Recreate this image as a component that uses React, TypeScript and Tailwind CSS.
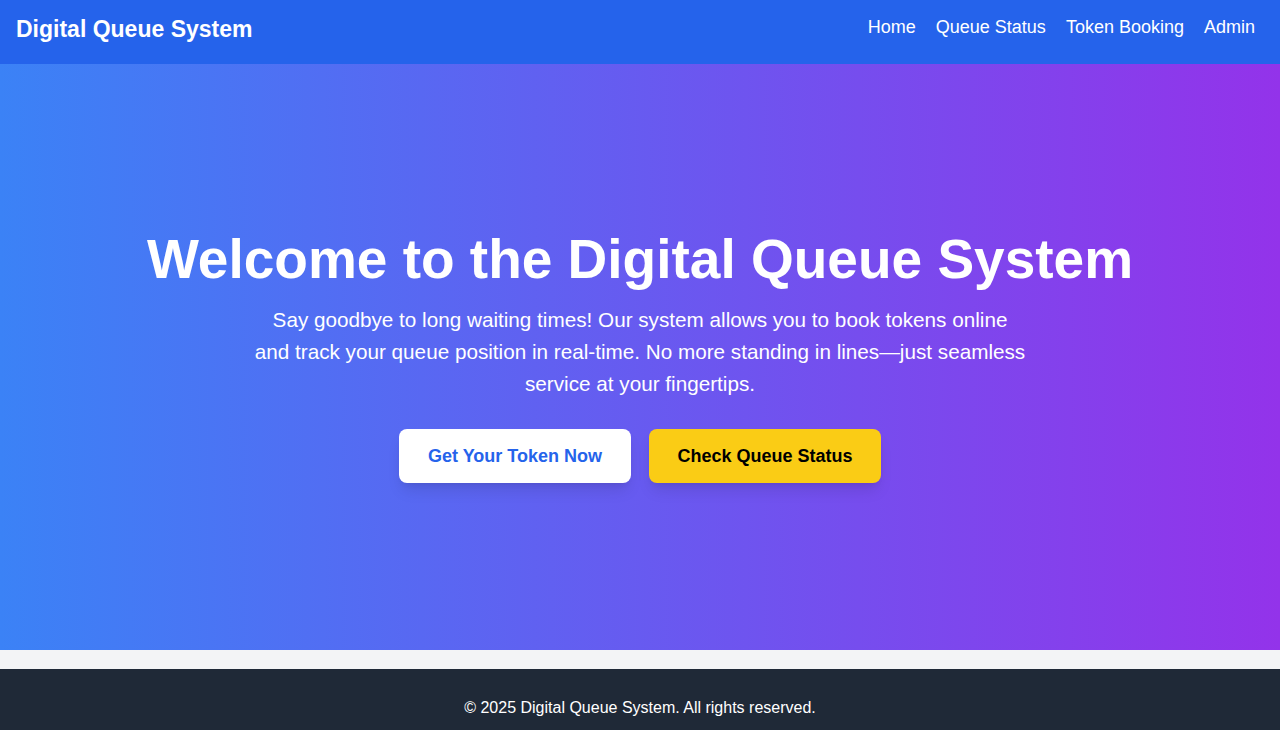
import React from 'react';

const links = ['Home', 'Queue Status', 'Token Booking', 'Admin'];

const App: React.FC = () => {
  return (
    <div className="min-h-screen bg-gray-100 font-['Liberation_Sans',Arial,sans-serif]">
      <nav className="flex h-16 items-start justify-between bg-[#2563eb] pl-4 pr-[25px] pt-[13px] text-white">
        <div className="text-[23px] font-bold leading-8">Digital Queue System</div>
        <ul className="flex gap-5 text-lg leading-7">
          {links.map((l) => (
            <li key={l}>
              <a href="#" className="hover:text-gray-200">
                {l}
              </a>
            </li>
          ))}
        </ul>
      </nav>

      <section className="flex h-[586px] flex-col items-center justify-center bg-[linear-gradient(to_right,#3b82f6,#9333ea)] text-center text-white">
        <h1 className="mb-[17px] text-[55px] font-bold leading-none">
          Welcome to the Digital Queue System
        </h1>
        <p className="mb-[29px] max-w-[773px] text-[20.7px] leading-8">
          Say goodbye to long waiting times! Our system allows you to book tokens online and track
          your queue position in real-time. No more standing in lines—just seamless service at your
          fingertips.
        </p>
        <div className="flex gap-[18px]">
          <button className="rounded-lg bg-white px-[29px] py-[13px] text-lg font-bold leading-7 text-[#2563eb] shadow-lg">
            Get Your Token Now
          </button>
          <button className="rounded-lg bg-[#facc15] px-[28.5px] py-[13px] text-lg font-bold leading-7 text-black shadow-lg">
            Check Queue Status
          </button>
        </div>
      </section>

      <footer className="mt-[19px] bg-[#1f2937] pb-4 pt-[27px] text-center text-base leading-6 text-white">
        © 2025 Digital Queue System. All rights reserved.
      </footer>
    </div>
  );
};

export default App;
